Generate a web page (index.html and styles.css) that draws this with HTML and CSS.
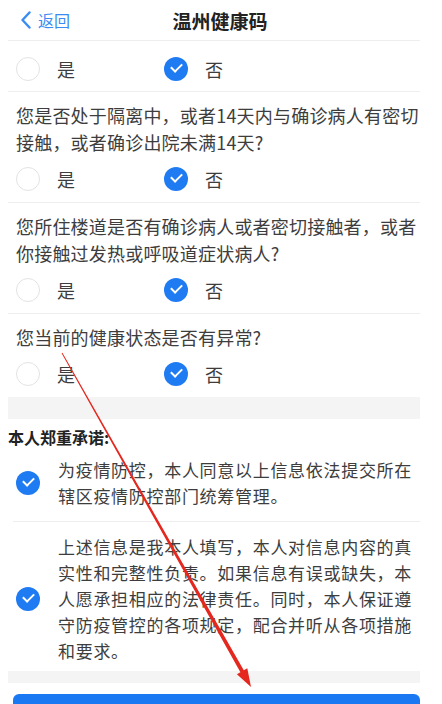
FILE: index.html
```html
<!DOCTYPE html>
<html lang="zh-CN">
<head>
    <meta charset="UTF-8">
    <meta name="viewport" content="width=device-width, initial-scale=1.0">
    <title>温州健康码</title>
    <link rel="stylesheet" href="styles.css">
</head>
<body>
    <div class="page">
        <div class="header">
            <div class="back">
                <svg class="back-icon" viewBox="0 0 12 18" width="12" height="18">
                    <path d="M9.5 1.5 L2.5 9 L9.5 16.5" fill="none" stroke="#3b8cf2" stroke-width="2.4" stroke-linecap="round" stroke-linejoin="round"/>
                </svg>
                <span>返回</span>
            </div>
            <div class="title">温州健康码</div>
            <div></div>
        </div>

        <div class="radio-row first">
            <div class="option"><span class="radio"></span>是</div>
            <div class="option"><span class="radio checked"></span>否</div>
        </div>

        <div class="question">
            <div class="q-text">您是否处于隔离中，或者14天内与确诊病人有密切接触，或者确诊出院未满14天?</div>
            <div class="radio-row">
                <div class="option"><span class="radio"></span>是</div>
                <div class="option"><span class="radio checked"></span>否</div>
            </div>
        </div>

        <div class="question">
            <div class="q-text">您所住楼道是否有确诊病人或者密切接触者，或者你接触过发热或呼吸道症状病人?</div>
            <div class="radio-row">
                <div class="option"><span class="radio"></span>是</div>
                <div class="option"><span class="radio checked"></span>否</div>
            </div>
        </div>

        <div class="question last">
            <div class="q-text">您当前的健康状态是否有异常?</div>
            <div class="radio-row">
                <div class="option"><span class="radio"></span>是</div>
                <div class="option"><span class="radio checked"></span>否</div>
            </div>
        </div>

        <div class="band"></div>

        <div class="promise-title">本人郑重承诺:</div>

        <div class="promise">
            <span class="radio checked"></span>
            <div class="promise-text">为疫情防控，本人同意以上信息依法提交所在辖区疫情防控部门统筹管理。</div>
        </div>
        <div class="promise last">
            <span class="radio checked"></span>
            <div class="promise-text">上述信息是我本人填写，本人对信息内容的真实性和完整性负责。如果信息有误或缺失，本人愿承担相应的法律责任。同时，本人保证遵守防疫管控的各项规定，配合并听从各项措施和要求。</div>
        </div>

        <div class="band small"></div>

        <div class="submit-btn"></div>
    </div>

    <!-- red annotation arrow drawn over the screenshot -->
    <svg class="arrow" viewBox="0 0 442 704" width="442" height="704">
        <polygon points="61.6,353.2 62.4,352.8 243.8,670.3 247.3,668.3 251,687 236.9,674.3 240.4,672.3" fill="#e5281f"/>
    </svg>
</body>
</html>
```

FILE: styles.css
```css
* {
    margin: 0;
    padding: 0;
    box-sizing: border-box;
}

html, body {
    height: 100%;
    overflow: hidden;
}

body {
    position: relative;
    background: #fff;
    font-family: "Noto Sans CJK SC", "Noto Sans", sans-serif;
    color: #3d3d3d;
}

.page {
    width: 412px;
    margin-left: 8px;
}

.header {
    display: grid;
    grid-template-columns: 1fr auto 1fr;
    align-items: center;
    height: 41px;
    padding-left: 12px;
    border-bottom: 1px solid #eeeeee;
}

.back {
    display: flex;
    align-items: center;
    gap: 6px;
    color: #3b8cf2;
    font-size: 16px;
}

.title {
    font-size: 19px;
    font-weight: bold;
    color: #222;
}

.radio-row {
    display: flex;
    align-items: center;
    padding: 11px 0 11px 8px;
    font-size: 18px;
}

.radio-row.first {
    padding: 16px 0 10px 8px;
    border-bottom: 1px solid #eeeeee;
}

.option {
    display: flex;
    align-items: center;
    gap: 17px;
    width: 148px;
    line-height: 24px;
}

.radio {
    flex: none;
    width: 24px;
    height: 24px;
    border-radius: 50%;
    border: 1.5px solid #e3e3e3;
    background: #fff;
    position: relative;
}

.radio.checked {
    border: none;
    background: #1f7bf2;
}

.radio.checked::after {
    content: '';
    position: absolute;
    left: 7px;
    top: 6px;
    width: 9px;
    height: 5px;
    border-left: 2px solid #fff;
    border-bottom: 2px solid #fff;
    transform: rotate(-45deg);
}

.question {
    padding-top: 10px;
    border-bottom: 1px solid #eeeeee;
}

.question.last {
    border-bottom: none;
}

.q-text {
    padding-left: 8px;
    font-size: 18px;
    letter-spacing: 0.2px;
    line-height: 27px;
}

.band {
    height: 22px;
    background: #f4f4f4;
}

.band.small {
    height: 12px;
}

.promise-title {
    padding-top: 6px;
    font-size: 16px;
    font-weight: bold;
    line-height: 24px;
    color: #222;
}

.promise {
    display: flex;
    align-items: center;
    gap: 18px;
    padding: 8px 4px 12px 3px;
    margin-left: 5px;
    border-bottom: 1px solid #eeeeee;
}

.promise.last {
    border-bottom: none;
    padding-top: 12px;
    padding-bottom: 7px;
}

.promise-text {
    font-size: 17px;
    letter-spacing: 0.7px;
    line-height: 26px;
}

.submit-btn {
    width: 407px;
    height: 44px;
    margin: 11px 0 0 5px;
    border-radius: 6px;
    background: #1a78f2;
}

.arrow {
    position: absolute;
    top: 0;
    left: 0;
    pointer-events: none;
}
```
